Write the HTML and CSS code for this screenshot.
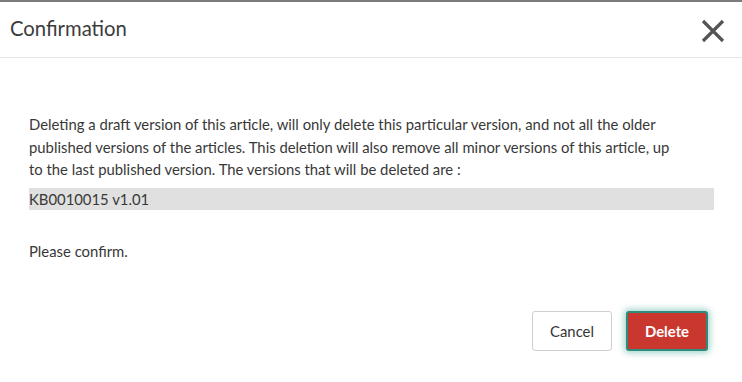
FILE: index.html
```html
<!DOCTYPE html>
<html>
<head>
<meta charset="utf-8">
<link rel="stylesheet" href="styles.css">
</head>
<body>
<div class="modal">
  <div class="modal-header">
    <h4 class="modal-title">Confirmation</h4>
    <button class="close-btn" aria-label="Close">
      <svg width="24" height="24" viewBox="0 0 24 24"><path d="M2 2 L22 22 M22 2 L2 22" stroke="#555" stroke-width="3.2" fill="none"/></svg>
    </button>
  </div>
  <div class="modal-body">
    <p class="msg">Deleting a draft version of this article, will only delete this particular version, and not all the older published versions of the articles. This deletion will also remove all minor versions of this article, up<br>to the last published version. The versions that will be deleted are :</p>
    <div class="versions">KB0010015 v1.01</div>
    <p class="confirm">Please confirm.</p>
  </div>
  <div class="modal-footer">
    <button class="btn btn-default">Cancel</button>
    <button class="btn btn-danger">Delete</button>
  </div>
</div>
</body>
</html>
```

FILE: styles.css
```css
html, body {
  margin: 0;
  padding: 0;
  background: #fff;
}
body {
  font-family: "Lato", "Noto Sans", sans-serif;
  color: #383838;
}
.modal {
  width: 742px;
  height: 382px;
  border-top: 2px solid #7b7b7b;
  box-sizing: border-box;
}
.modal-header {
  height: 55px;
  border-bottom: 1px solid #e3e3e3;
  display: flex;
  align-items: center;
  justify-content: space-between;
  padding: 0 17px 0 10px;
}
.modal-title {
  margin: 0;
  font-weight: 400;
  font-size: 20.3px;
  color: #3c3c3c;
  position: relative;
  top: -2px;
}
.close-btn {
  background: none;
  border: 0;
  padding: 0;
  width: 24px;
  height: 24px;
  display: flex;
  position: relative;
  top: 1px;
}
.modal-body {
  padding: 55px 28px 0 29px;
}
.msg {
  margin: 0;
  font-size: 14.85px;
  line-height: 22.5px;
  width: 670px;
}
.versions {
  margin-top: 7px;
  background: #e0e0e0;
  height: 22px;
  line-height: 22px;
  font-size: 14.85px;
  width: 685px;
}
.confirm {
  margin: 30px 0 0;
  font-size: 14.85px;
  line-height: 22px;
}
.modal-footer {
  display: flex;
  justify-content: flex-end;
  gap: 14px;
  padding: 49px 34px 0 0;
}
.btn {
  font-family: inherit;
  font-size: 14.85px;
  height: 40px;
  border-radius: 3px;
  box-sizing: border-box;
  cursor: pointer;
}
.btn-default {
  width: 80px;
  background: #fff;
  border: 1px solid #cfcfcf;
  color: #343434;
}
.btn-danger {
  width: 82px;
  background: #c9372f;
  border: 2px solid #2f8c7c;
  color: #fff;
  font-weight: 700;
  box-shadow: 0 0 6px 2px rgba(47, 160, 140, 0.45);
}
```
